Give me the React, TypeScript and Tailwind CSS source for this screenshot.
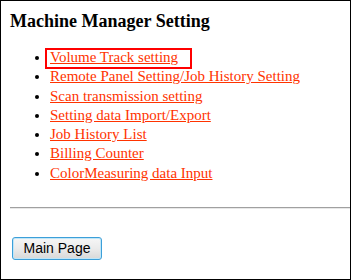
const links = [
  'Volume Track setting',
  'Remote Panel Setting/Job History Setting',
  'Scan transmission setting',
  'Setting data Import/Export',
  'Job History List',
  'Billing Counter',
  'ColorMeasuring data Input',
];

export default function App() {
  return (
    <div className="w-[351px] h-[280px] border border-black bg-white font-['Liberation_Serif',serif] text-black flex flex-col">
      {/* Title */}
      <h3 className="mt-[9px] ml-[9px] text-[18px] leading-[22px] font-bold">Machine Manager Setting</h3>

      {/* Menu */}
      <ul className="mt-[16px] ml-[49px] list-disc text-[15px] leading-[19.3px]">
        {links.map((l, i) => (
          <li key={l} className="relative">
            <a href="#" className="text-[#ff3300] underline">
              {l}
            </a>
            {i === 0 && (
              <span className="absolute left-[-5px] top-0 w-[147px] h-[21px] border-2 border-[#ff0000]" />
            )}
          </li>
        ))}
      </ul>

      {/* Separator */}
      <div className="mt-[24px] ml-[9px] border-t border-[#a0a0a0] border-b border-b-[#e8e8e8]" />

      {/* Footer */}
      <div className="mt-[27px] ml-[11px]">
        <button className="w-[90px] h-[23px] rounded-[3px] border border-[#3c9fd9] bg-gradient-to-b from-[#f6f6f6] via-[#ebebeb] to-[#d8d8d8] shadow-[inset_0_0_0_1px_#bfe6f8] font-['Liberation_Sans',Arial,sans-serif] text-[14px] text-black">
          Main Page
        </button>
      </div>
    </div>
  );
}
